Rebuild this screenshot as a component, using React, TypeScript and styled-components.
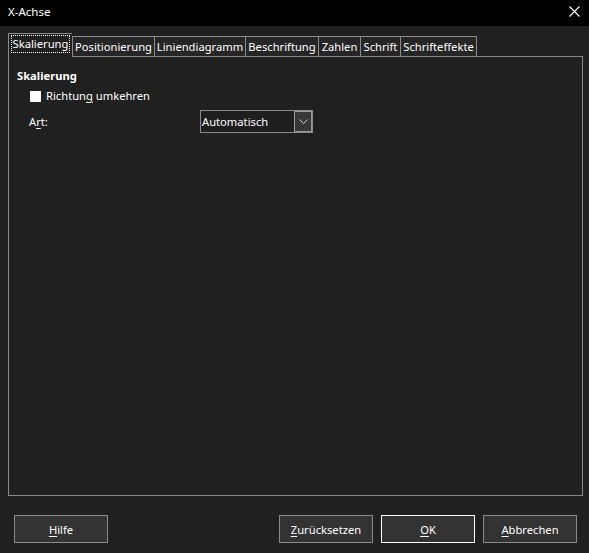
import React from "react";
import styled, { createGlobalStyle } from "styled-components";

const GlobalStyle = createGlobalStyle`
  html, body {
    margin: 0;
    padding: 0;
    background: #202020;
  }
  body {
    font-family: "Noto Sans", "Open Sans", sans-serif;
    font-size: 11.2px;
    color: #ffffff;
  }
`;

const tabs = [
  { label: "Skalierung", width: 64 },
  { label: "Positionierung", width: 82 },
  { label: "Liniendiagramm", width: 91 },
  { label: "Beschriftung", width: 73 },
  { label: "Zahlen", width: 42 },
  { label: "Schrift", width: 40 },
  { label: "Schrifteffekte", width: 77 },
];

const App = () => {
  return (
    <>
      <GlobalStyle />
      <Window>
        <TitleBar>
          <Title>X-Achse</Title>
          <Close>
            <svg width="11" height="11" viewBox="0 0 11 11">
              <path d="M0.5 0.5 L10.5 10.5 M10.5 0.5 L0.5 10.5" stroke="#fff" strokeWidth="1.1" />
            </svg>
          </Close>
        </TitleBar>

        <Body>
          <TabRow>
            {tabs.map((t, i) => (
              <Tab key={t.label} $width={t.width} $active={i === 0}>
                {i === 0 ? <Focus>{t.label}</Focus> : t.label}
              </Tab>
            ))}
          </TabRow>

          <Panel>
            <Heading>Skalierung</Heading>
            <CheckRow>
              <CheckBox />
              <span>
                Richtun<Mn>g</Mn> umkehren
              </span>
            </CheckRow>
            <FieldRow>
              <FieldLabel>
                A<Mn>r</Mn>t:
              </FieldLabel>
              <Combo>
                <ComboText>Automatisch</ComboText>
                <ComboButton>
                  <svg width="9" height="5" viewBox="0 0 9 5">
                    <path d="M0.5 0.5 L4.5 4.5 L8.5 0.5" stroke="#d0d0d0" strokeWidth="1" fill="none" />
                  </svg>
                </ComboButton>
              </Combo>
            </FieldRow>
          </Panel>

          <Footer>
            <Button>
              <Mn>H</Mn>ilfe
            </Button>
            <Right>
              <Button>
                <Mn>Z</Mn>urücksetzen
              </Button>
              <Button $default>
                <Mn>O</Mn>K
              </Button>
              <Button>
                <Mn>A</Mn>bbrechen
              </Button>
            </Right>
          </Footer>
        </Body>
      </Window>
    </>
  );
};

export default App;

const Window = styled.div`
  width: 589px;
  height: 553px;
  display: flex;
  flex-direction: column;
  background: #202020;
  overflow: hidden;
`;

const TitleBar = styled.div`
  height: 26px;
  flex-shrink: 0;
  background: #000000;
  display: flex;
  align-items: center;
  justify-content: space-between;
  padding: 0 9px 4px 8px;
  box-sizing: border-box;
`;

const Title = styled.div`
  font-size: 11.5px;
  color: #ffffff;
`;

const Close = styled.div`
  display: flex;
  align-items: center;
  margin-top: 1px;
`;

const Body = styled.div`
  flex: 1;
  display: flex;
  flex-direction: column;
  padding: 8px 6px 10px 8px;
`;

const TabRow = styled.div`
  display: flex;
  align-items: flex-end;
  height: 23px;
  margin-bottom: -1px;
  position: relative;
  z-index: 1;
`;

const Tab = styled.div<{ $width: number; $active?: boolean }>`
  width: ${(p) => p.$width}px;
  height: ${(p) => (p.$active ? 24 : 21)}px;
  box-sizing: border-box;
  border: 1px solid #8a8a8a;
  border-right: none;
  border-bottom: ${(p) => (p.$active ? "none" : "1px solid #8a8a8a")};
  background: ${(p) => (p.$active ? "#202020" : "#262626")};
  display: flex;
  align-items: center;
  justify-content: center;
  padding-bottom: ${(p) => (p.$active ? 3 : 0)}px;
  white-space: nowrap;
  color: #ffffff;
  line-height: 16px;

  &:last-child {
    border-right: 1px solid #8a8a8a;
  }
`;

const Focus = styled.span`
  outline: 1px dotted #ffffff;
  outline-offset: 0;
  padding: 0 1px;
`;

const Panel = styled.div`
  height: 440px;
  box-sizing: border-box;
  border: 1px solid #8a8a8a;
  padding: 10px 0 0 8px;
  display: flex;
  flex-direction: column;
`;

const Heading = styled.div`
  font-weight: bold;
  line-height: 17px;
`;

const CheckRow = styled.div`
  display: flex;
  align-items: center;
  gap: 5px;
  margin: 4px 0 0 13px;
  line-height: 16px;
`;

const CheckBox = styled.div`
  width: 11px;
  height: 11px;
  background: #ffffff;
`;

const FieldRow = styled.div`
  display: flex;
  align-items: center;
  margin: 6px 0 0 12px;
`;

const FieldLabel = styled.div`
  width: 171px;
`;

const Combo = styled.div`
  width: 113px;
  height: 23px;
  box-sizing: border-box;
  border: 1px solid #8a8a8a;
  display: flex;
  align-items: stretch;
  background: #1e1e1e;
`;

const ComboText = styled.div`
  flex: 1;
  padding-left: 1px;
  display: flex;
  align-items: center;
`;

const ComboButton = styled.div`
  width: 18px;
  box-sizing: border-box;
  border: 1px solid #9a9a9a;
  background: #383838;
  display: flex;
  align-items: center;
  justify-content: center;
`;

const Footer = styled.div`
  display: flex;
  justify-content: space-between;
  margin-top: auto;
  padding: 0 6px 0 6px;
`;

const Right = styled.div`
  display: flex;
  gap: 8px;
`;

const Button = styled.div<{ $default?: boolean }>`
  width: 94px;
  height: 28px;
  box-sizing: border-box;
  border: 1px solid ${(p) => (p.$default ? "#ffffff" : "#8a8a8a")};
  background: #333333;
  color: #ffffff;
  display: flex;
  align-items: center;
  justify-content: center;
`;

const Mn = styled.span`
  text-decoration: underline;
  text-underline-offset: 2px;
`;
